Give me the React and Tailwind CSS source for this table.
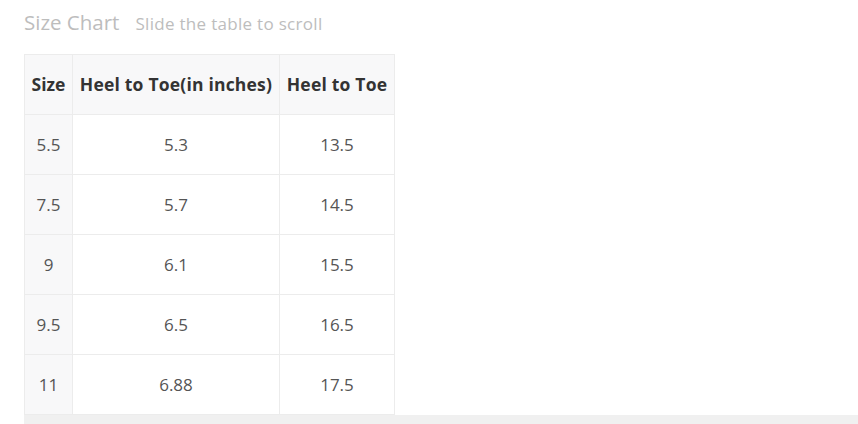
import React from 'react';

const rows = [
  ['5.5', '5.3', '13.5'],
  ['7.5', '5.7', '14.5'],
  ['9', '6.1', '15.5'],
  ['9.5', '6.5', '16.5'],
  ['11', '6.88', '17.5'],
];

const App = () => {
  return (
    <div className="min-h-screen bg-white pl-6 pt-[7px] font-['Open_Sans',sans-serif]">
      <div className="flex items-baseline h-[30px]">
        <span className="text-[20.5px] text-[#bdbdbd]">Size Chart</span>
        <span className="ml-[16px] text-[17px] tracking-[0.3px] text-[#bdbdbd]">Slide the table to scroll</span>
      </div>

      <div className="mt-[17px] w-[834px]">
        <table className="border-collapse table-fixed border-t border-l border-[#ececec]">
          <colgroup>
            <col className="w-[48px]" />
            <col className="w-[207px]" />
            <col className="w-[115px]" />
          </colgroup>
          <thead>
            <tr className="h-[60px] bg-[#f8f8f9]">
              <th className="px-0 text-[17.5px] font-bold text-[#333] border-r border-b border-[#ececec] whitespace-nowrap">Size</th>
              <th className="px-0 text-[17.5px] font-bold tracking-[0.2px] text-[#333] border-r border-b border-[#ececec] whitespace-nowrap">Heel to Toe(in inches)</th>
              <th className="px-0 text-[17.5px] font-bold tracking-[0.2px] text-[#333] border-r border-b border-[#ececec] whitespace-nowrap">Heel to Toe</th>
            </tr>
          </thead>
          <tbody>
            {rows.map((r, i) => (
              <tr key={i} className="h-[60px]">
                <td className="px-0 text-center text-[17px] text-[#555] bg-[#f8f8f9] border-r border-b border-[#ececec]">{r[0]}</td>
                <td className="px-0 text-center text-[17px] text-[#555] border-r border-b border-[#ececec]">{r[1]}</td>
                <td className="px-0 text-center text-[17px] text-[#555] border-r border-b border-[#ececec]">{r[2]}</td>
              </tr>
            ))}
          </tbody>
        </table>
        <div className="h-[10px] bg-[#f0f0f0]" />
      </div>
    </div>
  );
};

export default App;
